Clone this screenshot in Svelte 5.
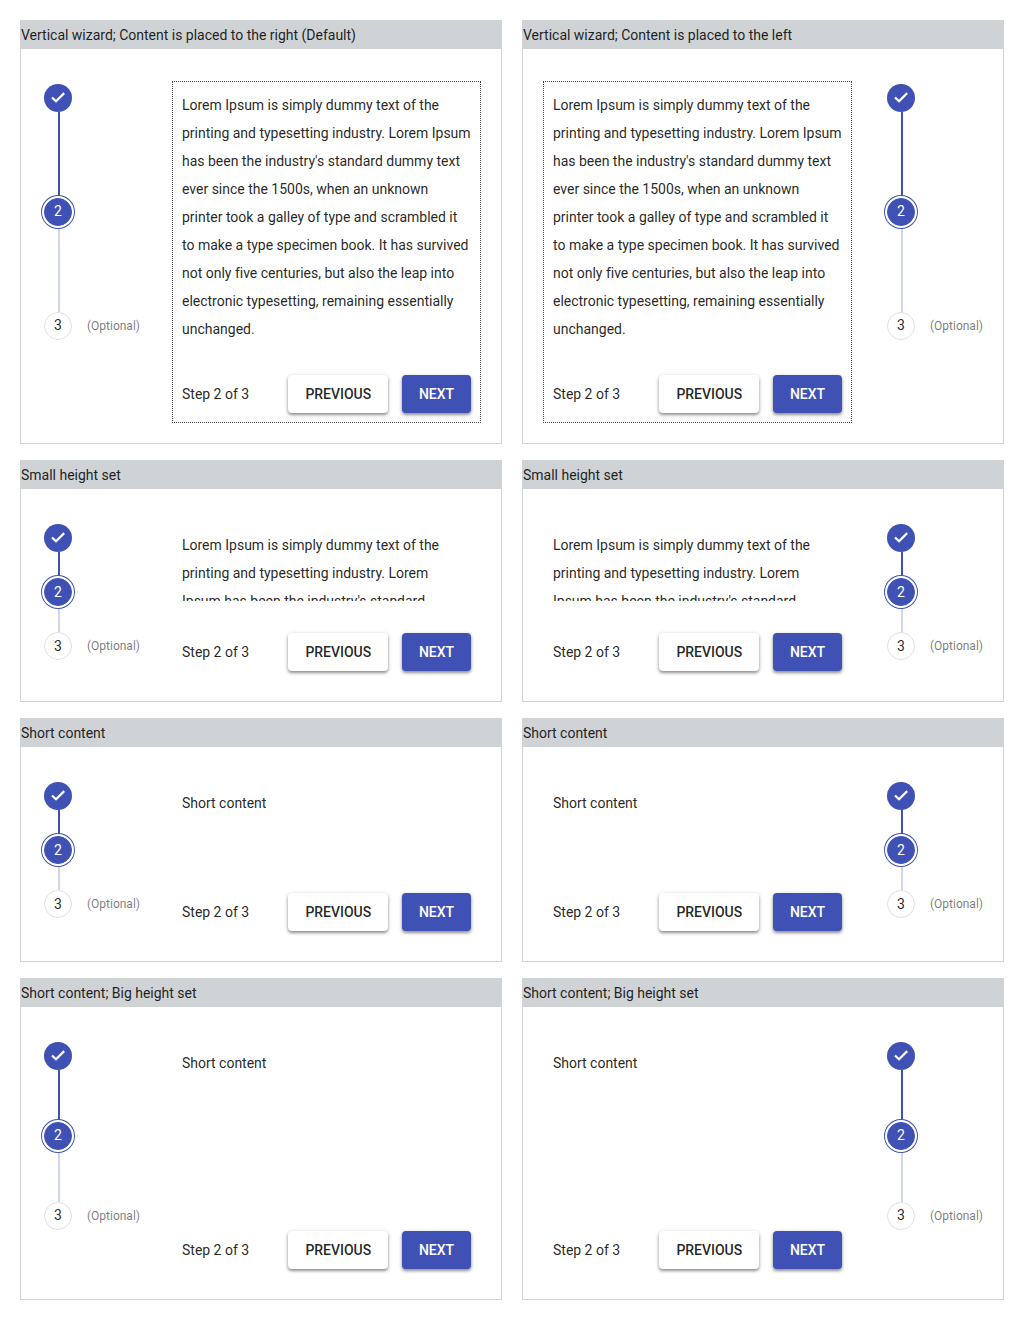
<script>
  const lorem =
    "Lorem Ipsum is simply dummy text of the printing and typesetting industry. Lorem Ipsum has been the industry's standard dummy text ever since the 1500s, when an unknown printer took a galley of type and scrambled it to make a type specimen book. It has survived not only five centuries, but also the leap into electronic typesetting, remaining essentially unchanged.";

  const rows = [
    {
      titles: [
        'Vertical wizard; Content is placed to the right (Default)',
        'Vertical wizard; Content is placed to the left'
      ],
      text: lorem, height: 252, gap: 86, outlined: true, raised: true
    },
    { titles: ['Small height set', 'Small height set'], text: lorem, height: 70, gap: 26, scroll: true },
    { titles: ['Short content', 'Short content'], text: 'Short content', height: 72, gap: 26 },
    {
      titles: ['Short content; Big height set', 'Short content; Big height set'],
      text: 'Short content', height: 150, gap: 52, raised: true
    }
  ];
</script>

<main>
  {#each rows as row}
    {#each row.titles as title, side}
      <section class="card">
        <h2>{title}</h2>
        <div class="wizard" class:flipped={side === 1}>
          <ol class="steps" class:raised={row.raised}>
            <li>
              <span class="dot done">
                <svg viewBox="0 0 28 28" aria-hidden="true">
                  <path d="M8 13.5L12 17.3L20.2 9.1" />
                </svg>
              </span>
            </li>
            <li class="line passed" style="height: {row.gap}px"></li>
            <li><span class="dot current">2</span></li>
            <li class="line" style="height: {row.gap}px"></li>
            <li><span class="dot">3</span><span class="optional">(Optional)</span></li>
          </ol>
          <div class="content" class:outlined={row.outlined}>
            <div class="text" class:scroll={row.scroll} style="height: {row.height}px">{row.text}</div>
            <footer>
              <span class="count">Step 2 of 3</span>
              <button>PREVIOUS</button>
              <button class="primary">NEXT</button>
            </footer>
          </div>
        </div>
      </section>
    {/each}
  {/each}
</main>

<style>
  :global(body) {
    background: #fff;
  }
  main {
    display: grid;
    grid-template-columns: 482px 482px;
    gap: 16px 20px;
    padding: 20px;
    font-family: Roboto, 'Liberation Sans', sans-serif;
    font-size: 14px;
    line-height: 28px;
    letter-spacing: -0.008px;
    color: rgba(0, 0, 0, 0.87);
  }
  .card {
    border: 1px solid #cfd3d6;
  }
  h2 {
    margin: 0;
    font-size: 14px;
    font-weight: 400;
    line-height: 28px;
    height: 28px;
    background: #cfd3d6;
  }
  .wizard {
    display: grid;
    grid-template-columns: 99px 309px;
    column-gap: 32px;
    padding: 32px 20px 20px;
  }
  .flipped {
    grid-template-columns: 309px 99px;
  }
  .flipped .content {
    order: -1;
  }
  .steps {
    list-style: none;
    margin: 0;
    padding: 3px 0 0 3px;
  }
  .steps li {
    display: flex;
    align-items: center;
  }
  .dot {
    box-sizing: border-box;
    width: 28px;
    height: 28px;
    flex: none;
    display: flex;
    align-items: center;
    justify-content: center;
    border: 1px solid #e0e0e0;
    border-radius: 50%;
    line-height: 26px;
  }
  .raised .dot {
    padding-bottom: 2px;
  }
  .steps .done {
    background: #3f51b5;
    border: 0;
    padding: 0;
  }
  .current {
    background: #3f51b5;
    border-color: #3f51b5;
    color: #fff;
    box-shadow: 0 0 0 2px #fff, 0 0 0 3px #3f51b5;
  }
  .done svg {
    width: 28px;
    height: 28px;
    fill: none;
    stroke: #fff;
    stroke-width: 2.2;
  }
  .line {
    width: 2px;
    margin-left: 14px;
    background: #d1d5ed;
  }
  .passed {
    background: #3f51b5;
  }
  .optional {
    margin-left: 15px;
    font-size: 12px;
    color: rgba(0, 0, 0, 0.54);
  }
  .content {
    box-sizing: border-box;
    border: 1px dotted transparent;
    padding: 9px;
  }
  .outlined {
    border-color: #424242;
  }
  .text {
    overflow: hidden;
  }
  .scroll {
    padding-right: 15px;
  }
  footer {
    display: flex;
    align-items: center;
    margin-top: 32px;
  }
  .count {
    margin-right: auto;
  }
  button {
    height: 38px;
    width: 100px;
    padding: 0 0 0 0.5px;
    border: 0;
    border-radius: 4px;
    background: #fff;
    color: rgba(0, 0, 0, 0.87);
    font: 500 14px/38px Roboto, 'Liberation Sans', sans-serif;
    letter-spacing: -0.03px;
    box-shadow: 0 2px 3px 0 rgba(0, 0, 0, 0.36), 0 1px 5px 0 rgba(0, 0, 0, 0.16);
  }
  .primary {
    width: 69px;
    padding: 0;
    margin-left: 14px;
    background: #3f51b5;
    color: #fff;
  }
</style>
